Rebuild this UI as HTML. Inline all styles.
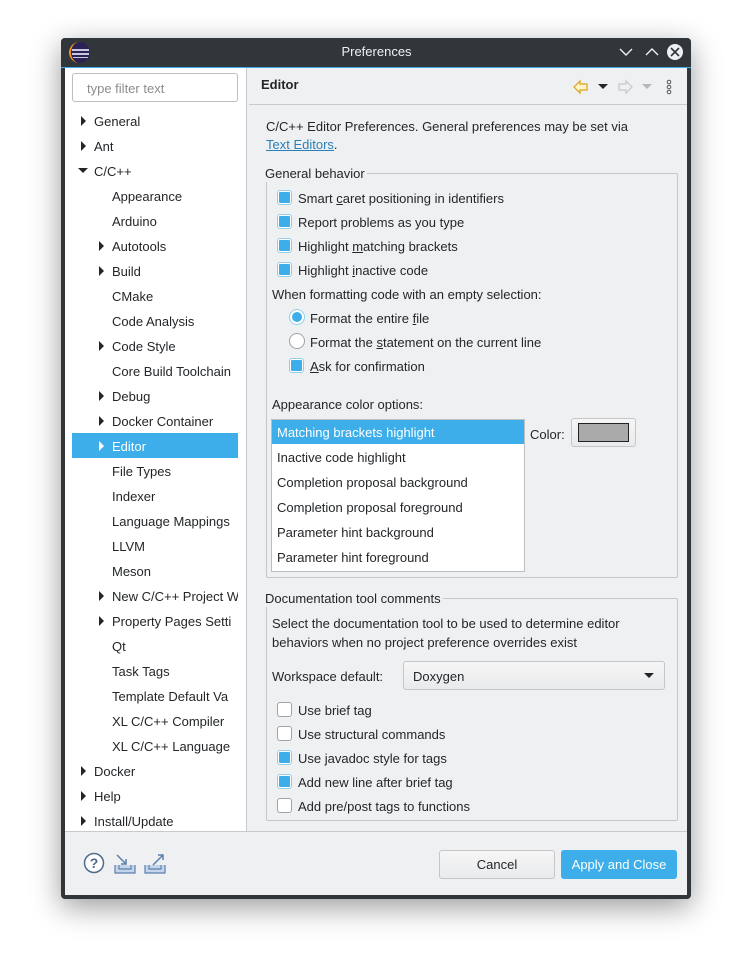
<!DOCTYPE html>
<html><head><meta charset="utf-8"><style>
*{box-sizing:border-box;margin:0;padding:0}
body{width:753px;height:961px;background:#fff;font-family:"Liberation Sans","DejaVu Sans",sans-serif;font-size:13px;color:#232629;position:relative;overflow:hidden}
.a{position:absolute;white-space:nowrap}
.win{position:absolute;left:61px;top:38px;width:630px;height:861px;background:#31363b;border-radius:4px;box-shadow:0 8px 30px rgba(0,0,0,.4)}
.t{position:absolute;line-height:16px;margin-top:1px}
.cb{position:absolute;width:15px;height:15px;border:1px solid #93cee9;border-radius:3px;background:#fff}
.cb.on::after{content:"";position:absolute;left:1px;top:1px;width:11px;height:11px;background:#3daee9;border-radius:1px}
.cb.off{border-color:#a0a2a4}
.rb{position:absolute;width:16px;height:16px;border-radius:50%;border:1px solid #a0a2a4;background:#fff}
.rb.on{border-color:#93cee9}
.rb.on::after{content:"";position:absolute;left:2px;top:2px;width:10px;height:10px;border-radius:50%;background:#3daee9}
.arr{position:absolute;width:0;height:0;border-top:5px solid transparent;border-bottom:5px solid transparent;border-left:5px solid #232629}
.arrd{position:absolute;width:0;height:0;border-left:5px solid transparent;border-right:5px solid transparent;border-top:5px solid #232629}
u{text-decoration:underline}
</style></head><body>
<div class="win"></div>
<div class="a" style="left:61px;top:38px;width:630px;height:29px;background:#31363b;border-radius:4px 4px 0 0"></div>
<div class="a" style="left:61px;top:67px;width:630px;height:1px;background:#3daee9"></div>
<div class="a" style="left:69px;top:42px;width:21px;height:21px;border-radius:50%;background:#2c2255;border-left:2px solid #f7941e"></div>
<div class="a" style="left:72px;top:49px;width:17px;height:2px;background:#c9c6e0"></div>
<div class="a" style="left:72px;top:53px;width:17px;height:2px;background:#c9c6e0"></div>
<div class="a" style="left:73px;top:57px;width:15px;height:1px;background:#c9c6e0"></div>
<div class="a" style="left:0;width:753px;top:44px;text-align:center;color:#eff0f1;font-size:13px">Preferences</div>
<svg class="a" style="left:618px;top:44px" width="70" height="16"><path d="M2 5l6 6 6-6M28 11l6-6 6 6" stroke="#eff0f1" stroke-width="1.4" fill="none"/><circle cx="57" cy="8" r="8" fill="#eff0f1"/><path d="M53 4l8 8M61 4l-8 8" stroke="#31363b" stroke-width="1.6"/></svg>
<div class="a" style="left:65px;top:68px;width:622px;height:827px;background:#eff0f1"></div>
<div class="a" style="left:65px;top:68px;width:182px;height:763px;background:#fff;border-right:1px solid #c9cacb"></div>
<div class="a" style="left:65px;top:831px;width:622px;height:1px;background:#c9cacb"></div>
<div class="a" style="left:72px;top:73px;width:166px;height:29px;border:1px solid #bcbebf;border-radius:3px;background:#fff"></div>
<div class="a t" style="left:87px;top:80px;color:#8a8d8f">type filter text</div>
<div class="a" style="left:72px;top:433px;width:166px;height:25px;background:#3daee9"></div>
<div id="tree"></div>
<div class="a t" style="left:261px;top:76px;font-weight:bold">Editor</div>
<div class="a" style="left:249px;top:104px;width:438px;height:1px;background:#c9cacb"></div>
<svg class="a" style="left:572px;top:78px" width="110" height="18"><path d="M2 9l6-6v3h7v6H8v3z" fill="#fff3c8" stroke="#d9a21b" stroke-width="1.2"/><path d="M26 6h10l-5 5z" fill="#232629"/><path d="M60 9l-6-6v3h-7v6h7v3z" fill="none" stroke="#c4c6c8" stroke-width="1.2"/><path d="M70 6h10l-5 5z" fill="#b5b7b9"/><circle cx="97" cy="4" r="1.8" fill="none" stroke="#555" /><circle cx="97" cy="9" r="1.8" fill="none" stroke="#555"/><circle cx="97" cy="14" r="1.8" fill="none" stroke="#555"/></svg>
<div class="a t" style="left:266px;top:118px">C/C++ Editor Preferences. General preferences may be set via</div>
<div class="a t" style="left:266px;top:136px"><span style="color:#2980b9;text-decoration:underline">Text Editors</span>.</div>
<div class="a" style="left:266px;top:173px;width:412px;height:405px;border:1px solid #c4c6c8;border-radius:2px"></div>
<div class="a t" style="left:265px;top:165px;background:#eff0f1;padding-right:2px">General behavior</div>
<div class="cb on" style="left:277px;top:190px"></div><div class="a t" style="left:298px;top:190px">Smart <u>c</u>aret positioning in identifiers</div>
<div class="cb on" style="left:277px;top:214px"></div><div class="a t" style="left:298px;top:214px">Report problems as you type</div>
<div class="cb on" style="left:277px;top:238px"></div><div class="a t" style="left:298px;top:238px">Highlight <u>m</u>atching brackets</div>
<div class="cb on" style="left:277px;top:262px"></div><div class="a t" style="left:298px;top:262px">Highlight <u>i</u>nactive code</div>
<div class="a t" style="left:272px;top:286px">When formatting code with an empty selection:</div>
<div class="rb on" style="left:289px;top:309px"></div><div class="a t" style="left:310px;top:310px">Format the entire <u>f</u>ile</div>
<div class="rb" style="left:289px;top:333px"></div><div class="a t" style="left:310px;top:334px">Format the <u>s</u>tatement on the current line</div>
<div class="cb on" style="left:289px;top:358px"></div><div class="a t" style="left:310px;top:358px"><u>A</u>sk for confirmation</div>
<div class="a t" style="left:272px;top:396px">Appearance color options:</div>
<div class="a" style="left:271px;top:419px;width:254px;height:153px;background:#fff;border:1px solid #bcbebf"></div>
<div class="a" style="left:272px;top:420px;width:252px;height:24px;background:#3daee9"></div>
<div class="a t" style="left:277px;top:424px;color:#fff">Matching brackets highlight</div>
<div class="a t" style="left:277px;top:449px">Inactive code highlight</div>
<div class="a t" style="left:277px;top:474px">Completion proposal background</div>
<div class="a t" style="left:277px;top:499px">Completion proposal foreground</div>
<div class="a t" style="left:277px;top:524px">Parameter hint background</div>
<div class="a t" style="left:277px;top:549px">Parameter hint foreground</div>
<div class="a t" style="left:530px;top:426px">Color:</div>
<div class="a" style="left:571px;top:418px;width:65px;height:29px;border:1px solid #c4c6c8;border-radius:3px;background:linear-gradient(#f6f6f7,#e9eaeb)"></div>
<div class="a" style="left:578px;top:423px;width:51px;height:19px;background:#aaa;border:1px solid #222"></div>
<div class="a" style="left:266px;top:598px;width:412px;height:223px;border:1px solid #c4c6c8;border-radius:2px"></div>
<div class="a t" style="left:265px;top:590px;background:#eff0f1;padding-right:2px">Documentation tool comments</div>
<div class="a t" style="left:272px;top:615px">Select the documentation tool to be used to determine editor</div>
<div class="a t" style="left:272px;top:634px">behaviors when no project preference overrides exist</div>
<div class="a t" style="left:272px;top:668px">Workspace default:</div>
<div class="a" style="left:403px;top:661px;width:262px;height:29px;border:1px solid #c4c6c8;border-radius:3px;background:linear-gradient(#f6f6f7,#e9eaeb)"></div>
<div class="a t" style="left:413px;top:668px">Doxygen</div>
<div class="arrd" style="left:644px;top:673px"></div>
<div class="cb off" style="left:277px;top:702px"></div><div class="a t" style="left:298px;top:702px">Use brief tag</div>
<div class="cb off" style="left:277px;top:726px"></div><div class="a t" style="left:298px;top:726px">Use structural commands</div>
<div class="cb on" style="left:277px;top:750px"></div><div class="a t" style="left:298px;top:750px">Use javadoc style for tags</div>
<div class="cb on" style="left:277px;top:774px"></div><div class="a t" style="left:298px;top:774px">Add new line after brief tag</div>
<div class="cb off" style="left:277px;top:798px"></div><div class="a t" style="left:298px;top:798px">Add pre/post tags to functions</div>
<svg class="a" style="left:83px;top:852px" width="90" height="24"><circle cx="11" cy="11" r="9.5" fill="#fff" stroke="#4d6a8f" stroke-width="1.5"/><text x="11" y="16" text-anchor="middle" font-size="14" font-family="Liberation Sans" font-weight="bold" fill="#4d6a8f">?</text>
<path d="M32 13v8h20v-8M36 13v4h12v-4" fill="#c5d6ea" stroke="#5b7fae" stroke-width="1.2"/><path d="M34 3l9 9M43 7v5h-5" stroke="#5b7fae" stroke-width="1.5" fill="none"/>
<path d="M62 13v8h20v-8M66 13v4h12v-4" fill="#c5d6ea" stroke="#5b7fae" stroke-width="1.2"/><path d="M70 13l10-10M75 3h5v5" stroke="#5b7fae" stroke-width="1.5" fill="none"/></svg>
<div class="a" style="left:439px;top:850px;width:116px;height:29px;border:1px solid #c4c6c8;border-radius:3px;background:linear-gradient(#f6f6f7,#e9eaeb);text-align:center;line-height:28px">Cancel</div>
<div class="a" style="left:561px;top:850px;width:116px;height:29px;border-radius:3px;background:#3daee9;color:#fff;text-align:center;line-height:30px">Apply and Close</div>
<script>
var items=[[0,1,"General"],[0,1,"Ant"],[0,2,"C/C++"],[1,0,"Appearance"],[1,0,"Arduino"],[1,1,"Autotools"],[1,1,"Build"],[1,0,"CMake"],[1,0,"Code Analysis"],[1,1,"Code Style"],[1,0,"Core Build Toolchain"],[1,1,"Debug"],[1,1,"Docker Container"],[1,1,"Editor"],[1,0,"File Types"],[1,0,"Indexer"],[1,0,"Language Mappings"],[1,0,"LLVM"],[1,0,"Meson"],[1,1,"New C/C++ Project W"],[1,1,"Property Pages Setti"],[1,0,"Qt"],[1,0,"Task Tags"],[1,0,"Template Default Va"],[1,0,"XL C/C++ Compiler"],[1,0,"XL C/C++ Language"],[0,1,"Docker"],[0,1,"Help"],[0,1,"Install/Update"]];
var h="";items.forEach(function(it,i){var y=121+i*25;var x=it[0]?112:94;var sel=it[2]=="Editor";var c=sel?"#fff":"#232629";
if(it[1]==1)h+='<div class="arr" style="left:'+(x-13)+'px;top:'+(y-5)+'px;border-left-color:'+c+'"></div>';
if(it[1]==2)h+='<div class="arrd" style="left:'+(x-16)+'px;top:'+(y-3)+'px"></div>';
h+='<div class="a" style="left:'+x+'px;top:'+(y-7)+'px;line-height:16px;width:'+(238-x)+'px;overflow:hidden;color:'+c+'">'+it[2]+'</div>';});
document.getElementById("tree").innerHTML=h;
</script>
</body></html>
